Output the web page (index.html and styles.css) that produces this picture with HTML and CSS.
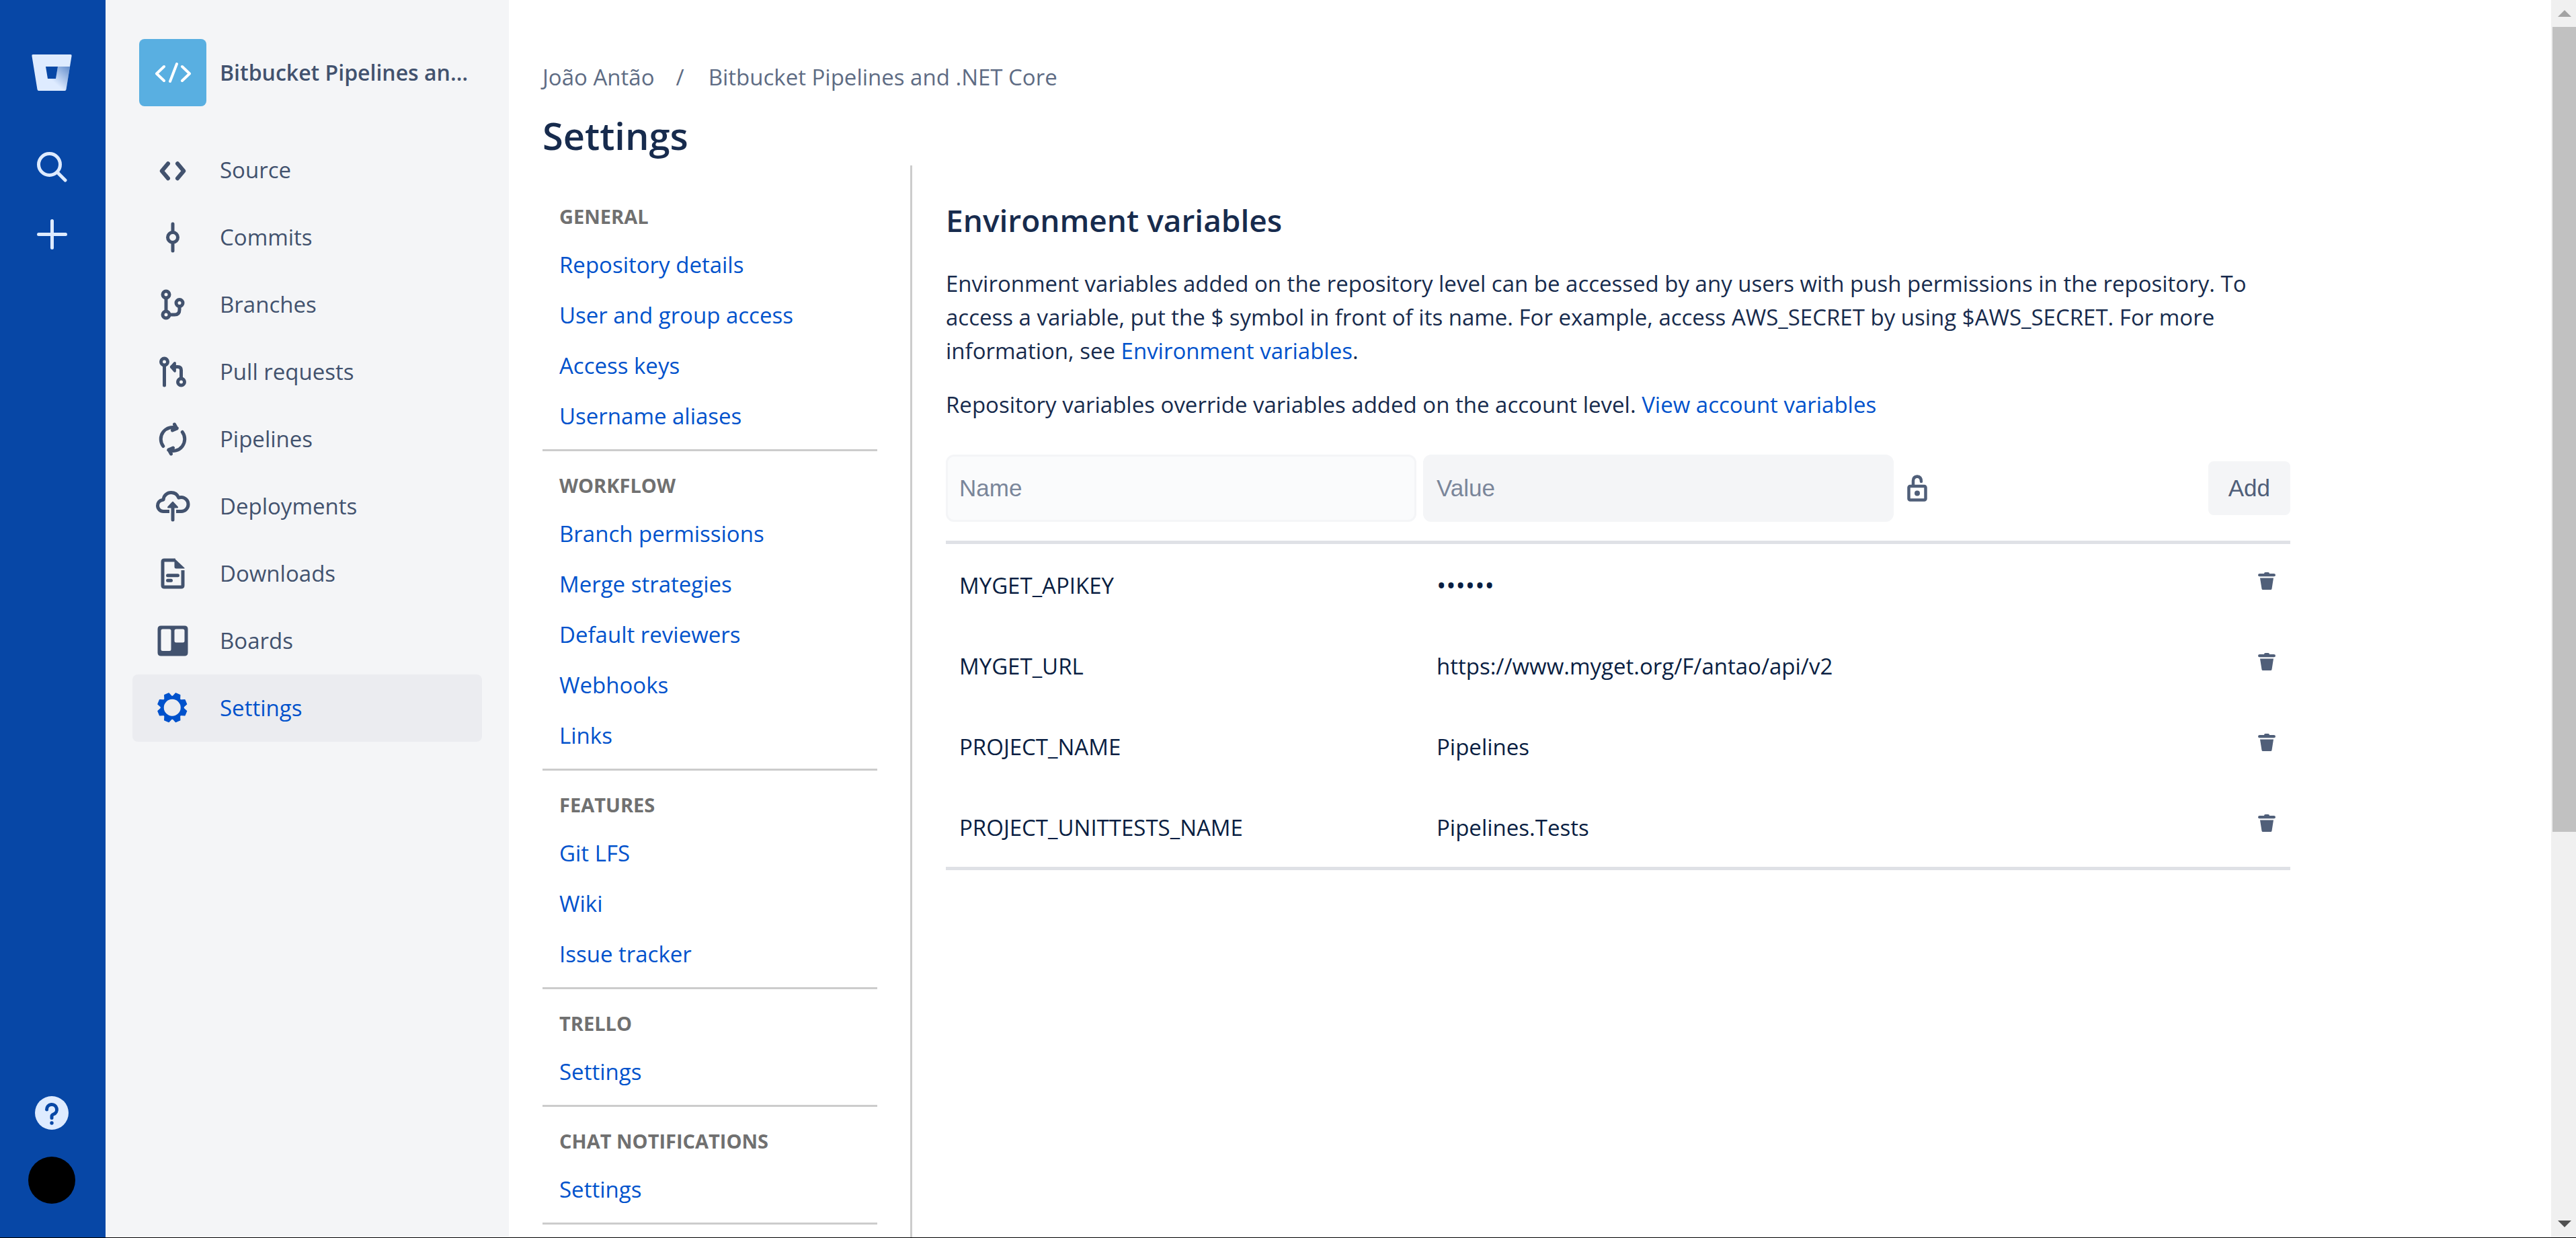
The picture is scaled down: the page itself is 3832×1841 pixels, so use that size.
FILE: index.html
```html
<!DOCTYPE html>
<html lang="en">
<head>
<meta charset="utf-8">
<title>Settings — Bitbucket Pipelines and .NET Core</title>
<meta name="viewport" content="width=device-width, initial-scale=1">
<link rel="stylesheet" href="styles.css">
</head>
<body>
<div class="app">
  <nav class="rail" aria-label="Global">
    <a class="rail-link" href="#" aria-label="Bitbucket">
      <svg class="logo" viewBox="0 0 60 54" aria-hidden="true">
        <defs>
          <linearGradient id="fold" gradientUnits="userSpaceOnUse" x1="55" y1="18" x2="34" y2="42">
            <stop offset="0" stop-color="#0747a6" stop-opacity=".55"/>
            <stop offset="1" stop-color="#0747a6" stop-opacity="0"/>
          </linearGradient>
        </defs>
        <path fill="#deebff" fill-rule="evenodd" d="M2 0H58Q60 0 59.600 2L51.500 52Q51 54 49.500 54H10.500Q9 54 8.500 52L.4 2Q0 0 2 0ZM21 18 24 36H36L39 18Z"/>
        <path fill="url(#fold)" d="M39 18H57L51.500 52Q51 54 49.500 54H10.500L24 36H36Z"/>
      </svg>
    </a>
    <button class="rail-button" type="button" aria-label="Search">
      <svg class="rail-icon" viewBox="0 0 45 45" aria-hidden="true"><g fill="none" stroke="#deebff" stroke-width="5" stroke-linecap="round"><circle cx="18.500" cy="18.500" r="16"/><path d="M30.500 30.500 42 42"/></g></svg>
    </button>
    <button class="rail-button" type="button" aria-label="Create">
      <svg class="rail-icon" viewBox="0 0 45 45" aria-hidden="true"><path fill="none" stroke="#deebff" stroke-width="5" stroke-linecap="round" d="M22.500 2.500v40M2.500 22.500h40"/></svg>
    </button>
    <div class="rail-bottom">
      <button class="rail-button" type="button" aria-label="Help">
        <svg class="help-icon" viewBox="0 0 50 50" aria-hidden="true"><circle cx="25" cy="25" r="25" fill="#deebff"/><path fill="none" stroke="#0747a6" stroke-width="5" stroke-linecap="round" stroke-linejoin="round" d="M17.500 20a7.500 7.500 0 1 1 10 7q-2.500 1-2.500 3v2.500"/><circle cx="25" cy="40" r="2.700" fill="#0747a6"/></svg>
      </button>
      <button class="rail-button" type="button" aria-label="Your profile"><span class="user"></span></button>
    </div>
  </nav>

  <aside class="sidebar">
    <a class="repo" href="#">
      <svg class="repo-avatar" viewBox="0 0 100 100" aria-hidden="true"><path fill="none" stroke="#fff" stroke-width="4" stroke-linecap="round" stroke-linejoin="round" d="M37 41 26 51.500 37 62M64 41l11 10.500L64 62M56 37 46 63"/></svg>
      <span class="repo-name">Bitbucket Pipelines and .NET Core</span>
    </a>
    <ul class="side-list">
      <li><a class="side-link" href="#"><svg class="icon line" viewBox="0 0 24 24" aria-hidden="true"><path stroke-width="2.400" d="M9.200 8.100 5.500 12.500l3.700 4.400M14.800 8.100l3.700 4.400-3.700 4.400"/></svg>Source</a></li>
      <li><a class="side-link" href="#"><svg class="icon line" viewBox="0 0 24 24" aria-hidden="true"><circle cx="12" cy="12" r="3"/><path d="M12 4v4M12 16v4"/></svg>Commits</a></li>
      <li><a class="side-link" href="#"><svg class="icon line" viewBox="0 0 24 24" aria-hidden="true"><circle cx="8" cy="6" r="2"/><circle cx="8" cy="18" r="2"/><circle cx="16" cy="11" r="2"/><path d="M8 9v6M11 18h2q3 0 3-3v-1"/></svg>Branches</a></li>
      <li><a class="side-link" href="#"><svg class="icon line" viewBox="0 0 24 24" aria-hidden="true"><circle cx="7" cy="6" r="2"/><circle cx="17" cy="18" r="2"/><path d="M7 9v11M17 15v-4q0-2-2-2h-3.500"/><path fill="currentColor" stroke-width="1.500" d="M13.200 6.700 11.100 9.100l2.100 2.400Z"/></svg>Pull requests</a></li>
      <li><a class="side-link" href="#"><svg class="icon line" viewBox="0 0 24 24" aria-hidden="true"><path d="M6.300 16.200A7 7 0 0 1 14.500 5.500M13 3.200l1.400 2.500-2.600 1.100M17.700 7.800A7 7 0 0 1 9.500 18.500M11 20.800 9.600 18.300l2.600-1.100"/></svg>Pipelines</a></li>
      <li><a class="side-link" href="#"><svg class="icon line" viewBox="0 0 24 24" aria-hidden="true"><path stroke-linecap="butt" d="M10 15H6.400A3.400 3.400 0 0 1 3 11.600c0-1.700 1.100-3.100 2.800-3.400q.7-.1.700-.6C6.700 5.500 8.600 3.800 11 3.800c2.100 0 3.800 1.200 4.500 3.100.4-.2.900-.3 1.500-.3a4.200 4.200 0 0 1 0 8.400h-3"/><path d="M12 12v8"/><path fill="currentColor" stroke-width="1" d="M12 9.600 14.700 12.500H9.300Z"/></svg>Deployments</a></li>
      <li><a class="side-link" href="#"><svg class="icon line" viewBox="0 0 24 24" aria-hidden="true"><path stroke-linecap="butt" d="M13.500 4H7q-1 0-1 1v14q0 1 1 1h10q1 0 1-1V10"/><path fill="currentColor" stroke="none" d="M13 3 19 8.600V9h-5q-1 0-1-1Z"/><path d="M9 13.100h6M9 16.100h2"/></svg>Downloads</a></li>
      <li><a class="side-link" href="#"><svg class="icon" viewBox="0 0 24 24" aria-hidden="true"><path fill="currentColor" fill-rule="evenodd" d="M5 3h14q2 0 2 2v14q0 2-2 2H5q-2 0-2-2V5q0-2 2-2ZM6 5Q5 5 5 6v11q0 1 1 1h4q1 0 1-1V6q0-1-1-1ZM14 5q-1 0-1 1v6q0 1 1 1h4q1 0 1-1V6q0-1-1-1Z"/></svg>Boards</a></li>
      <li><a class="side-link current" href="#" aria-current="page"><svg class="icon" viewBox="0 0 24 24" aria-hidden="true">
        <circle cx="11.700" cy="11.700" r="6" fill="none" stroke="currentColor" stroke-width="2"/>
        <g fill="currentColor" stroke="currentColor" stroke-width=".5" stroke-linejoin="round">
          <path id="tooth" transform="rotate(22.500 11.700 11.700)" d="M9.300 5.800 10.300 3h2.800l1 2.800Z"/>
          <use href="#tooth" transform="rotate(45 11.700 11.700)"/>
          <use href="#tooth" transform="rotate(90 11.700 11.700)"/>
          <use href="#tooth" transform="rotate(135 11.700 11.700)"/>
          <use href="#tooth" transform="rotate(180 11.700 11.700)"/>
          <use href="#tooth" transform="rotate(225 11.700 11.700)"/>
          <use href="#tooth" transform="rotate(270 11.700 11.700)"/>
          <use href="#tooth" transform="rotate(315 11.700 11.700)"/>
        </g></svg>Settings</a></li>
    </ul>
  </aside>

  <main class="main">
    <nav aria-label="Breadcrumb">
      <ol class="crumbs">
        <li><a href="#">João Antão</a></li>
        <li><a href="#">Bitbucket Pipelines and .NET Core</a></li>
      </ol>
    </nav>
    <h1 class="page-title">Settings</h1>
    <div class="columns">
      <nav class="settings-nav" aria-label="Repository settings">
        <section class="group">
          <h2 class="group-title">General</h2>
          <a href="#">Repository details</a>
          <a href="#">User and group access</a>
          <a href="#">Access keys</a>
          <a href="#">Username aliases</a>
        </section>
        <section class="group">
          <h2 class="group-title">Workflow</h2>
          <a href="#">Branch permissions</a>
          <a href="#">Merge strategies</a>
          <a href="#">Default reviewers</a>
          <a href="#">Webhooks</a>
          <a href="#">Links</a>
        </section>
        <section class="group">
          <h2 class="group-title">Features</h2>
          <a href="#">Git LFS</a>
          <a href="#">Wiki</a>
          <a href="#">Issue tracker</a>
        </section>
        <section class="group">
          <h2 class="group-title">Trello</h2>
          <a href="#">Settings</a>
        </section>
        <section class="group">
          <h2 class="group-title">Chat notifications</h2>
          <a href="#">Settings</a>
        </section>
      </nav>

      <section class="content">
        <h2 class="content-title">Environment variables</h2>
        <p>Environment variables added on the repository level can be accessed by any users with push permissions in the repository. To access a variable, put the $ symbol in front of its name. For example, access AWS_SECRET by using $AWS_SECRET. For more information, see <a href="#">Environment variables</a>.</p>
        <p>Repository variables override variables added on the account level. <a href="#">View account variables</a></p>

        <form class="add-form">
          <input class="field field-name" type="text" aria-label="Name" placeholder="Name">
          <input class="field" type="text" aria-label="Value" placeholder="Value">
          <button class="plain-button" type="button" aria-label="Secure this variable">
            <svg class="lock-icon" viewBox="0 0 30 40" aria-hidden="true"><g fill="none" stroke="currentColor" stroke-width="4.500" stroke-linecap="round"><rect x="2.500" y="17" width="25" height="20.500" rx="2"/><path d="M9 16V9q0-6 6-6.500Q21 3 21 10"/></g><circle cx="15" cy="27.500" r="4" fill="currentColor"/></svg>
          </button>
          <button class="add-button" type="button">Add</button>
        </form>

        <table class="variables">
          <tbody>
            <tr><td class="name">MYGET_APIKEY</td><td><span class="masked">••••••</span></td><td class="action"><button class="plain-button" type="button" aria-label="Delete MYGET_APIKEY"><svg class="trash-icon" viewBox="0 0 26 26" aria-hidden="true"><path id="trash" fill="currentColor" d="M9 2Q9 0 11 0h4q2 0 2 2h6.500Q26 2 26 4.200 26 6.300 23.500 6.300h-21Q0 6.300 0 4.200 0 2 2.500 2ZM3 8.500H23L20.500 24.500Q20.200 26 19 26H7Q5.800 26 5.500 24.500Z"/></svg></button></td></tr>
            <tr><td class="name">MYGET_URL</td><td>https://www.myget.org/F/antao/api/v2</td><td class="action"><button class="plain-button" type="button" aria-label="Delete MYGET_URL"><svg class="trash-icon" viewBox="0 0 26 26" aria-hidden="true"><use href="#trash"/></svg></button></td></tr>
            <tr><td class="name">PROJECT_NAME</td><td>Pipelines</td><td class="action"><button class="plain-button" type="button" aria-label="Delete PROJECT_NAME"><svg class="trash-icon" viewBox="0 0 26 26" aria-hidden="true"><use href="#trash"/></svg></button></td></tr>
            <tr><td class="name">PROJECT_UNITTESTS_NAME</td><td>Pipelines.Tests</td><td class="action"><button class="plain-button" type="button" aria-label="Delete PROJECT_UNITTESTS_NAME"><svg class="trash-icon" viewBox="0 0 26 26" aria-hidden="true"><use href="#trash"/></svg></button></td></tr>
          </tbody>
        </table>
      </section>
    </div>
  </main>

  <div class="scrollbar" aria-hidden="true">
    <svg class="scroll-arrow up" viewBox="0 0 20 10"><path fill="currentColor" d="M10 0 20 10H0Z"/></svg>
    <div class="scroll-track"><div class="scroll-thumb"></div></div>
    <svg class="scroll-arrow down" viewBox="0 0 20 10"><path fill="currentColor" d="M10 10 0 0H20Z"/></svg>
  </div>
</div>
</body>
</html>
```

FILE: styles.css
```css
:root {
  --navy: #172b4d;
  --slate: #42526e;
  --blue: #0052cc;
  --rail: #0747a6;
  --panel: #f4f5f7;
  --text: 33px;
}

* { box-sizing: border-box; }

body {
  margin: 0;
  color: var(--navy);
  background: #fff;
  font: 400 var(--text)/50px "Segoe UI", "Open Sans", "Noto Sans", sans-serif;
}

a { color: var(--blue); text-decoration: none; }
a:hover { text-decoration: underline; }
ul, ol { margin: 0; padding: 0; list-style: none; }
svg { display: block; flex: none; }

button {
  padding: 0;
  border: 0;
  background: none;
  color: inherit;
  font: inherit;
  cursor: pointer;
}

.app {
  display: flex;
  height: 100vh;
  overflow: hidden;
  border-bottom: 1px solid #000;
}

/* Global rail */
.rail {
  flex: none;
  display: flex;
  flex-direction: column;
  align-items: center;
  width: 157px;
  padding: 58px 3px 35px 0;
  background: var(--rail);
}
.rail-link {
  display: flex;
  align-items: center;
  height: 100px;
  margin-bottom: 40px;
}
.rail-button {
  display: flex;
  align-items: center;
  justify-content: center;
  width: 100px;
  height: 100px;
}
.rail-bottom { margin-top: auto; }
.logo { width: 60px; height: 54px; }
.rail-icon { width: 45px; height: 45px; }
.help-icon { width: 50px; height: 50px; }
.user {
  width: 70px;
  height: 70px;
  border-radius: 50%;
  background: #000;
}

/* Repository sidebar */
.sidebar {
  flex: none;
  width: 600px;
  padding: 58px 40px;
  background: var(--panel);
  color: var(--slate);
}
.repo {
  display: flex;
  align-items: center;
  gap: 20px;
  margin-bottom: 45px;
  padding: 0 10px;
  color: inherit;
  font-size: 32px;
  font-weight: 600;
}
.repo-avatar {
  width: 100px;
  height: 100px;
  border-radius: 8px;
  background: #59afe1;
}
.repo-name {
  overflow: hidden;
  text-overflow: ellipsis;
  white-space: nowrap;
}
.side-link {
  display: flex;
  align-items: center;
  gap: 40px;
  height: 100px;
  padding: 0 30px;
  border-radius: 8px;
  color: inherit;
}
.side-link.current { background: #ebecf0; color: var(--blue); }
.icon { width: 60px; height: 60px; }
.icon.line {
  fill: none;
  stroke: currentColor;
  stroke-width: 2;
  stroke-linecap: round;
  stroke-linejoin: round;
}

/* Main area */
.main {
  flex: 1;
  display: flex;
  flex-direction: column;
  min-width: 0;
  padding: 90px 50px 0;
}
.crumbs { display: flex; color: #5e6c84; }
.crumbs a { color: inherit; }
.crumbs li + li::before { content: "/"; padding: 0 36px 0 32px; }
.page-title {
  margin: 24px 0 8px;
  font-size: 56px;
  font-weight: 600;
  line-height: 74px;
}
.columns { display: flex; flex: 1; min-height: 0; }

.settings-nav {
  flex: none;
  width: 550px;
  padding-right: 49px;
  border-right: 3px solid #ccc;
}
.group {
  display: flex;
  flex-direction: column;
  padding: 26px 25px 12px;
  border-bottom: 3px solid #ccc;
}
.group:first-child { padding-top: 51px; }
.group-title {
  margin: 0 0 9px;
  color: #707070;
  font-size: 29px;
  font-weight: 700;
  line-height: 50px;
  text-transform: uppercase;
}
.group a { line-height: 75px; }

.content {
  flex: 0 1 2050px;
  min-width: 0;
  padding: 50px 0 0 50px;
}
.content-title {
  margin: 0 0 39px;
  font-size: 46px;
  font-weight: 600;
  line-height: 62px;
}
.content p { margin: 0 0 30px; }

.add-form {
  display: flex;
  align-items: center;
  gap: 10px;
  margin-top: 49px;
}
.field {
  flex: 0 1 35%;
  min-width: 0;
  height: 100px;
  padding: 0 17px;
  border: 3px solid var(--panel);
  border-radius: 12px;
  background: var(--panel);
  color: var(--navy);
  font: 35px/50px "Liberation Sans", Arial, sans-serif;
}
.field-name { background: #fafbfc; }
.field::placeholder { color: #7a869a; opacity: 1; }
.plain-button { color: #505f79; }
.add-form .plain-button { padding: 0 10px; }
.lock-icon { width: 30px; height: 40px; }
.add-button {
  height: 80px;
  margin-left: auto;
  padding: 0 30px;
  border-radius: 8px;
  background: var(--panel);
  color: #505f79;
  font: 35px/50px "Liberation Sans", Arial, sans-serif;
}

.variables {
  width: 100%;
  margin-top: 28px;
  border-collapse: separate;
  border-spacing: 0;
  border: solid #dfe1e6;
  border-width: 5px 0;
  color: #091e42;
}
.variables td { height: 120px; padding: 4px 20px 0; }
.variables .name { width: 710px; }
.variables .action { width: 120px; padding: 0 22px 10px; }
.masked { font-size: 38px; }
.action .plain-button { display: block; margin-left: auto; }
.trash-icon { width: 26px; height: 26px; }

/* Scrollbar */
.scrollbar {
  flex: none;
  display: flex;
  flex-direction: column;
  align-items: center;
  width: 37px;
  padding-left: 2px;
  background: #f0f0f0;
}
.scroll-arrow { width: 20px; height: 10px; margin: 15px 0; }
.scroll-arrow.up { color: #a3a3a3; }
.scroll-arrow.down { color: #505050; }
.scroll-track { flex: 1; width: 100%; }
.scroll-thumb { height: 68%; background: #c1c1c1; }
```
